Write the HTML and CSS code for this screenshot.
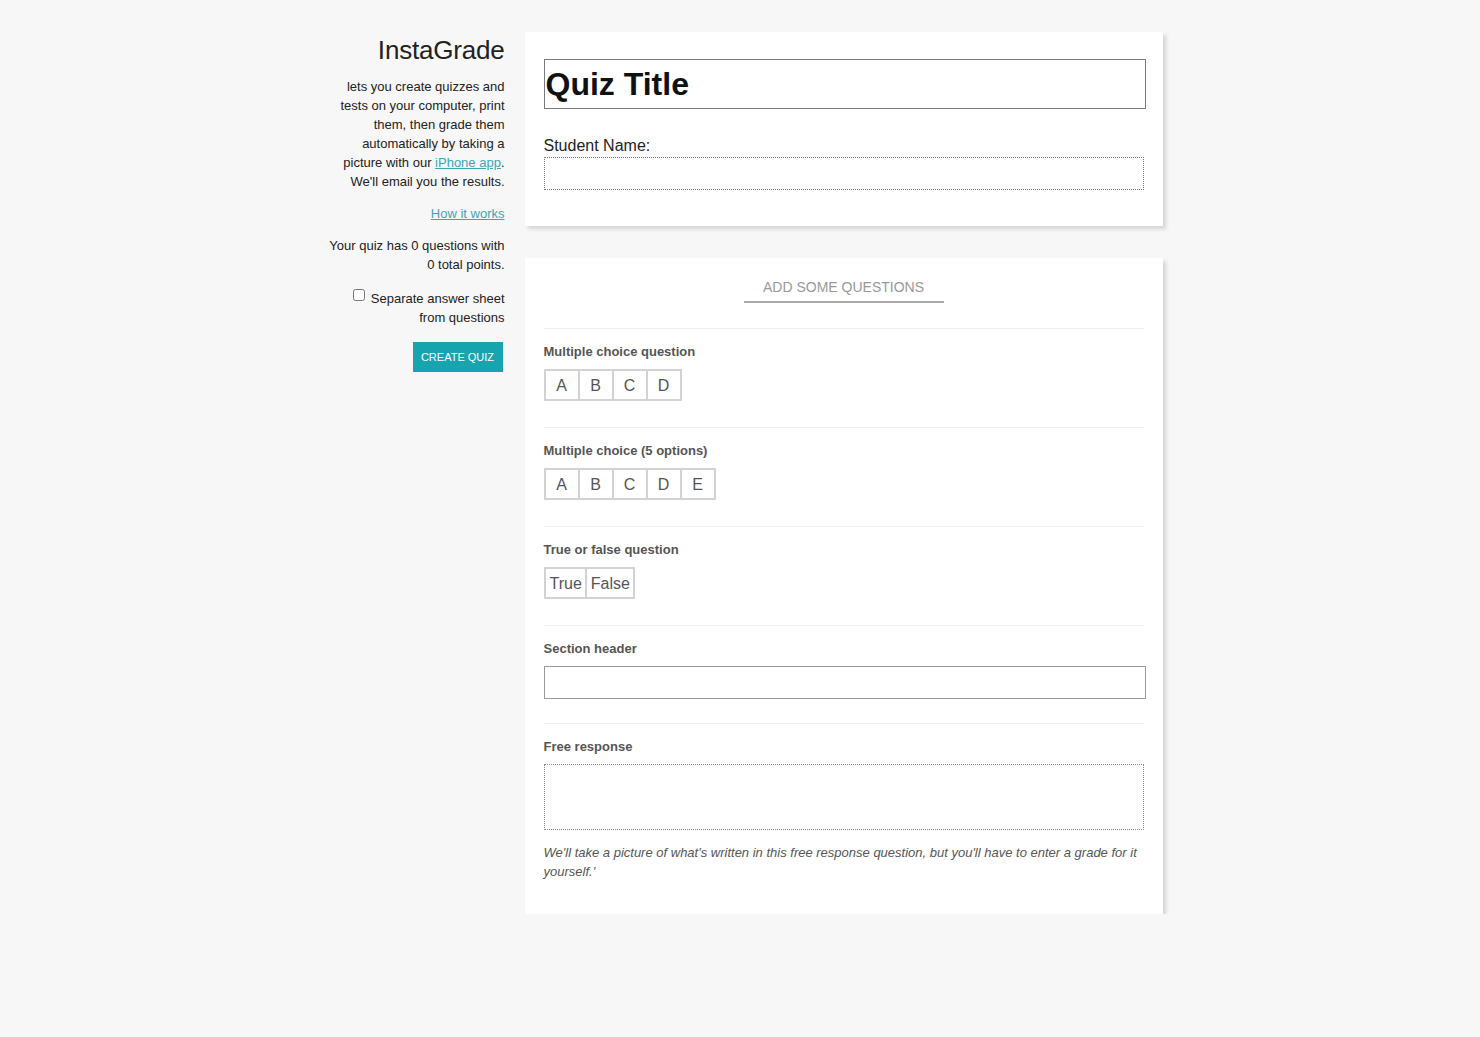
FILE: index.html
```html
<!DOCTYPE html>
<html>
<head>
<meta charset="utf-8">
<title>InstaGrade</title>
<link rel="stylesheet" href="styles.css">
</head>
<body>
<div class="page">
  <aside class="sidebar">
    <h1 class="brand">InstaGrade</h1>
    <p class="intro">lets you create quizzes and tests on your computer, print them, then grade them automatically by taking a picture with our <a href="#">iPhone app</a>. We'll email you the results.</p>
    <p class="how"><a href="#">How it works</a></p>
    <p class="count">Your quiz has 0 questions with 0 total points.</p>
    <label class="separate"><input type="checkbox" class="check"> Separate answer sheet from questions</label>
    <div class="actions"><button class="create">CREATE QUIZ</button></div>
  </aside>

  <main class="main">
    <section class="card header-card">
      <div class="title-box">Quiz Title</div>
      <div class="student-label">Student Name:</div>
      <div class="dotted-box name-box"></div>
    </section>

    <section class="card questions-card">
      <div class="tab-wrap"><span class="tab">ADD SOME QUESTIONS</span></div>

      <div class="qtype">
        <div class="qlabel">Multiple choice question</div>
        <div class="options">
          <span class="opt">A</span><span class="opt">B</span><span class="opt">C</span><span class="opt">D</span>
        </div>
      </div>

      <div class="qtype">
        <div class="qlabel">Multiple choice (5 options)</div>
        <div class="options">
          <span class="opt">A</span><span class="opt">B</span><span class="opt">C</span><span class="opt">D</span><span class="opt">E</span>
        </div>
      </div>

      <div class="qtype">
        <div class="qlabel">True or false question</div>
        <div class="options">
          <span class="opt word">True</span><span class="opt word">False</span>
        </div>
      </div>

      <div class="qtype">
        <div class="qlabel">Section header</div>
        <div class="section-box"></div>
      </div>

      <div class="qtype last">
        <div class="qlabel">Free response</div>
        <div class="dotted-box free-box"></div>
        <p class="note">We'll take a picture of what's written in this free response question, but you'll have to enter a grade for it yourself.'</p>
      </div>
    </section>
  </main>
</div>
</body>
</html>
```

FILE: styles.css
```css
html, body {
  margin: 0;
  padding: 0;
  background: #f7f7f7;
}

body {
  font-family: "Liberation Sans", Arial, sans-serif;
  color: #222;
  font-size: 13px;
  line-height: 19px;
}

.page {
  display: flex;
  align-items: flex-start;
  gap: 20px;
  width: 843px;
  margin: 0 auto;
  padding-top: 32px;
  padding-left: 2px;
}

/* left column: text hangs off the right edge */
.sidebar {
  width: 185px;
  padding-left: 7px;
  box-sizing: border-box;
  flex: none;
  text-align: right;
}

.brand {
  margin: 3px 0 0;
  font-size: 26px;
  line-height: 30px;
  font-weight: normal;
  color: #222;
  letter-spacing: -0.2px;
}

.intro {
  margin: 12px 0 0;
}

.sidebar a {
  color: #3aa8b4;
  text-decoration: underline;
}

.how {
  margin: 13px 0 0;
}

.count {
  margin: 13px 0 0;
}

.separate {
  display: block;
  margin-top: 15px;
}

.check {
  width: 12px;
  height: 12px;
  margin: 0 2px 0 4px;
  vertical-align: 2px;
}

.actions {
  margin-top: 15px;
  padding-right: 2px;
}

.create {
  background: #17a4ae;
  color: #fff;
  border: 0;
  font-family: "Liberation Sans", Arial, sans-serif;
  font-size: 11px;
  height: 30px;
  width: 90px;
  padding: 0;
  cursor: pointer;
}

/* right column */
.main {
  width: 638px;
  flex: none;
}

.card {
  background: #fff;
  box-shadow: 3px 3px 4px rgba(0, 0, 0, 0.14);
  padding: 0 19px;
}

.header-card {
  padding-top: 27px;
  padding-bottom: 36px;
}

.title-box {
  width: 599px;
  height: 48px;
  border: 1px solid #7a7a7a;
  font-size: 32px;
  font-weight: bold;
  line-height: 48px;
  color: #111;
  padding-left: 1px;
}

.student-label {
  margin-top: 27px;
  font-size: 16px;
  line-height: 20px;
  color: #222;
}

.dotted-box {
  box-sizing: border-box;
  width: 100%;
  border: 1px dotted #777;
}

.name-box {
  height: 33px;
  margin-top: 1px;
}

.questions-card {
  margin-top: 32px;
  padding-bottom: 33px;
}

.tab-wrap {
  text-align: center;
  padding-top: 20px;
  height: 50px;
  box-sizing: border-box;
}

.tab {
  display: inline-block;
  width: 200px;
  font-size: 14px;
  line-height: 18px;
  color: #999;
  padding-bottom: 5px;
  border-bottom: 2px solid #aaa;
}

.qtype {
  border-top: 1px solid #eee;
  margin-top: 20px;
  padding-top: 15px;
  padding-bottom: 4px;
}

.qlabel {
  font-size: 13px;
  font-weight: bold;
  line-height: 16px;
  color: #555;
}

.options {
  display: flex;
  margin-top: 9px;
  padding-left: 2px;
  padding-bottom: 2px;
}

.opt {
  box-sizing: border-box;
  min-width: 36px;
  height: 32px;
  border: 2px solid #d2d2d2;
  margin-left: -2px;
  display: flex;
  align-items: center;
  justify-content: center;
  font-size: 16px;
  color: #555;
  padding: 0 2px;
}

.opt.word {
  min-width: 0;
  padding: 0 3px 0 4px;
}

.section-box {
  margin-top: 9px;
  width: 600px;
  height: 31px;
  border: 1px solid #9a9a9a;
}

.free-box {
  margin-top: 9px;
  height: 66px;
  border-color: #888;
}

.note {
  margin: 13px 0 0;
  font-style: italic;
  color: #555;
}

.qtype.last {
  padding-bottom: 0;
}
```
